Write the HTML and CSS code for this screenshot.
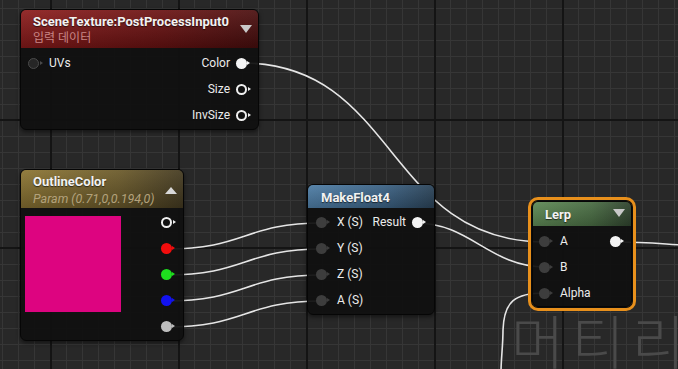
FILE: index.html
```html
<!DOCTYPE html>
<html lang="ko">
<head>
  <meta charset="UTF-8">
  <title>Material Graph</title>
  <link rel="stylesheet" href="styles.css">
</head>
<body>
  <div class="graph">
    <!-- background watermark -->
    <div class="watermark">머티리얼</div>

    <!-- Wires (drawn under the nodes) -->
    <svg class="wires" width="678" height="369" viewBox="0 0 678 369">
      <path d="M 242 63 C 398 63, 385 242, 545 242"/>
      <path d="M 416 223 C 470 223, 490 267, 545 267"/>
      <path d="M 167 249 C 245 249, 245 223, 322 223"/>
      <path d="M 167 275 C 245 275, 245 249, 322 249"/>
      <path d="M 167 301 C 245 301, 245 275, 322 275"/>
      <path d="M 167 327 C 245 327, 245 301, 322 301"/>
      <path d="M 615 242 C 650 242, 660 244, 700 246"/>
      <path d="M 545 293 C 515 293, 504 301, 503 330 C 503 345, 501 360, 501 372"/>
    </svg>

    <!-- SceneTexture node -->
    <div class="node node-scene">
      <div class="node-header header-red">
        <div class="header-text">
          <div class="node-title">SceneTexture:PostProcessInput0</div>
          <div class="node-sub sub-red">입력 데이터</div>
        </div>
        <span class="tri tri-down"></span>
      </div>
      <div class="node-body">
        <div class="row">
          <div class="pin-in"><span class="pin pin-empty"></span><span>UVs</span></div>
          <div class="pin-out"><span>Color</span><span class="pin pin-white"></span></div>
        </div>
        <div class="row row-end">
          <div class="pin-out"><span>Size</span><span class="pin pin-hollow"></span></div>
        </div>
        <div class="row row-end">
          <div class="pin-out"><span>InvSize</span><span class="pin pin-hollow"></span></div>
        </div>
      </div>
    </div>

    <!-- OutlineColor parameter node -->
    <div class="node node-color">
      <div class="node-header header-gold">
        <div class="header-text">
          <div class="node-title">OutlineColor</div>
          <div class="node-sub sub-gold">Param (0.71,0,0.194,0)</div>
        </div>
        <span class="tri tri-up"></span>
      </div>
      <div class="node-body color-body">
        <div class="swatch"></div>
        <div class="pin-column">
          <div class="row row-end"><span class="pin pin-hollow"></span></div>
          <div class="row row-end"><span class="pin pin-red"></span></div>
          <div class="row row-end"><span class="pin pin-green"></span></div>
          <div class="row row-end"><span class="pin pin-blue"></span></div>
          <div class="row row-end"><span class="pin pin-light"></span></div>
        </div>
      </div>
    </div>

    <!-- MakeFloat4 node -->
    <div class="node node-float">
      <div class="node-header header-blue">
        <div class="node-title">MakeFloat4</div>
      </div>
      <div class="node-body">
        <div class="row">
          <div class="pin-in"><span class="pin pin-gray"></span><span>X (S)</span></div>
          <div class="pin-out"><span>Result</span><span class="pin pin-white"></span></div>
        </div>
        <div class="row">
          <div class="pin-in"><span class="pin pin-gray"></span><span>Y (S)</span></div>
        </div>
        <div class="row">
          <div class="pin-in"><span class="pin pin-gray"></span><span>Z (S)</span></div>
        </div>
        <div class="row">
          <div class="pin-in"><span class="pin pin-gray"></span><span>A (S)</span></div>
        </div>
      </div>
    </div>

    <!-- Lerp node (selected) -->
    <div class="node node-lerp selected">
      <div class="node-header header-green">
        <div class="node-title">Lerp</div>
        <span class="tri tri-down"></span>
      </div>
      <div class="node-body">
        <div class="row">
          <div class="pin-in"><span class="pin pin-gray"></span><span>A</span></div>
          <div class="pin-out"><span class="pin pin-white"></span></div>
        </div>
        <div class="row">
          <div class="pin-in"><span class="pin pin-gray"></span><span>B</span></div>
        </div>
        <div class="row">
          <div class="pin-in"><span class="pin pin-gray"></span><span>Alpha</span></div>
        </div>
      </div>
    </div>
  </div>
</body>
</html>
```

FILE: styles.css
```css
/* General */
body {
  margin: 0;
  background: #262626;
  font-family: Roboto, "Noto Sans CJK KR", sans-serif;
  color: #ececec;
}

/* Grid canvas */
.graph {
  position: relative;
  width: 678px;
  height: 369px;
  overflow: hidden;
  background-color: #282828;
  background-image:
    linear-gradient(to right, #141414 2px, transparent 2px),
    linear-gradient(to bottom, #141414 2px, transparent 2px),
    linear-gradient(to right, #363636 1px, transparent 1px),
    linear-gradient(to bottom, #363636 1px, transparent 1px);
  background-size: 128px 128px, 128px 128px, 16px 16px, 16px 16px;
  background-position: 50px 0, 0 119px, 2px 0, 0 8px;
}

.watermark {
  position: absolute;
  left: 511px;
  top: 316px;
  font-family: "Noto Sans CJK KR", sans-serif;
  font-size: 58px;
  font-weight: 300;
  line-height: 0.8;
  letter-spacing: 7px;
  color: #4a4a4a;
  white-space: nowrap;
}

.wires {
  position: absolute;
  left: 0;
  top: 0;
}

.wires path {
  fill: none;
  stroke: #e6e6e6;
  stroke-width: 1.6;
}

/* Nodes */
.node {
  position: absolute;
  background: rgba(16, 16, 16, 0.94);
  border: 1px solid #060606;
  border-radius: 6px;
  overflow: hidden;
  box-shadow: 0 2px 4px rgba(0, 0, 0, 0.5);
  font-size: 12px;
}

.node-scene { left: 20px; top: 9px; width: 237px; }
.node-color { left: 20px; top: 169px; width: 162px; }
.node-float { left: 307px; top: 184px; width: 126px; }
.node-lerp  { left: 532px; top: 201px; width: 98px; }

.selected {
  box-shadow: 0 0 0 1px #0c0c0c, 0 0 0 4px #e8901c;
}

.node-header {
  display: flex;
  justify-content: space-between;
  align-items: center;
  padding: 4px 6px 2px 12px;
}

.node-title {
  font-size: 13px;
  font-weight: bold;
  line-height: 15px;
  color: #f2f2f2;
  white-space: nowrap;
  text-shadow: 0 1px 1px rgba(0, 0, 0, 0.6);
}

.node-sub {
  margin-top: 2px;
  line-height: 15px;
  font-size: 12px;
  white-space: nowrap;
}

.sub-red { color: #c98686; }
.sub-gold { color: #b3a27c; font-style: italic; font-size: 12.5px; }

.header-red {
  background: linear-gradient(to bottom, rgba(255, 255, 255, 0.08), rgba(0, 0, 0, 0.25)),
              linear-gradient(to right, #8c1b1b, #6a1212 60%, #4a0e0e);
}

.header-gold {
  background: linear-gradient(to bottom, rgba(255, 255, 255, 0.06), rgba(0, 0, 0, 0.25)),
              linear-gradient(to right, #8d7634, #6d5c2c 60%, #463c22);
}

.header-blue {
  padding: 5px 6px 3px 13px;
  background: linear-gradient(to bottom, rgba(255, 255, 255, 0.06), rgba(0, 0, 0, 0.2)),
              linear-gradient(to right, #4f7ea6, #3c6284 60%, #2b4358);
}

.header-green {
  padding: 5px 6px 4px 12px;
  background: linear-gradient(to bottom, rgba(255, 255, 255, 0.06), rgba(0, 0, 0, 0.2)),
              linear-gradient(to right, #5f8a56, #4a6d44 60%, #30432e);
}

/* header arrows */
.tri {
  width: 0;
  height: 0;
  border-left: 6px solid transparent;
  border-right: 6px solid transparent;
}

.tri-down {
  border-top: 8px solid #c9c9c9;
  margin-bottom: 3px;
}

.tri-up {
  border-bottom: 7px solid #d8d8d8;
}

/* Rows and pins */
.node-body {
  padding: 2px 11px 1px 7px;
}

.node-float .node-body { padding: 1px 11px 1px 8px; }
.node-lerp .node-body { padding: 2px 10px 0 6px; }

.row {
  display: flex;
  justify-content: space-between;
  align-items: center;
  height: 26px;
  white-space: nowrap;
}

.row-end { justify-content: flex-end; }

.pin-in, .pin-out {
  display: flex;
  align-items: center;
}

.pin-in { gap: 10px; }
.pin-out { gap: 6px; }

.pin {
  position: relative;
  display: inline-block;
  box-sizing: border-box;
  width: 11px;
  height: 11px;
  border-radius: 50%;
  color: #f0f0f0;
  background: currentColor;
}

.pin::after {
  content: "";
  position: absolute;
  left: 11px;
  top: 3px;
  border-left: 3px solid currentColor;
  border-top: 2.5px solid transparent;
  border-bottom: 2.5px solid transparent;
}

.pin-white { color: #f4f4f4; }
.pin-hollow { background: transparent; border: 2px solid #f0f0f0; }
.pin-hollow::after { left: 10px; top: 1px; border-left-color: #f0f0f0; }
.pin-empty { background: #262626; border: 1.5px solid #4a4a4a; color: #4a4a4a; }
.pin-empty::after { top: 2px; }
.pin-gray { color: #3d3d3d; }
.pin-red { color: #f20d0d; }
.pin-green { color: #1ee01e; }
.pin-blue { color: #1212f0; }
.pin-light { color: #bdbdbd; }

/* Color parameter body */
.color-body {
  display: flex;
  justify-content: space-between;
  padding: 1px 11px 1px 4px;
}

.swatch {
  width: 96px;
  height: 96px;
  margin-top: 7px;
  background: #dd0480;
}
```
